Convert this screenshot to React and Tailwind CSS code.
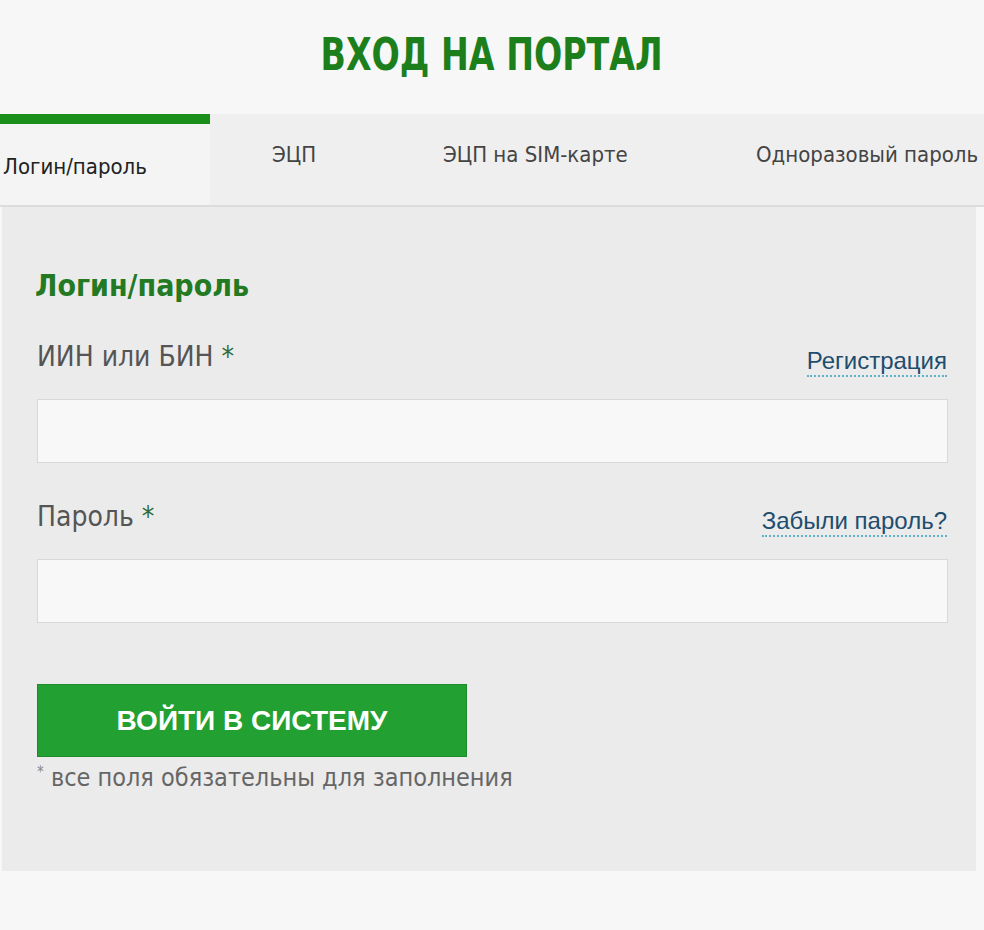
import React from 'react';

const tabs = ['Логин/пароль', 'ЭЦП', 'ЭЦП на SIM-карте', 'Одноразовый пароль'];

const Field = ({ label, link }) => (
  <div className="flex flex-col">
    <div className="flex items-center justify-between h-[44px]">
      <span className="text-[28px] text-[#555] leading-none">
        {label} <span className="text-[#2f6b35]">*</span>
      </span>
      <a
        href="#"
        className="mt-[11px] mr-[1px] text-[24px] text-[#1e4d6e] leading-none pb-[2px] border-b-2 border-dotted border-[#5fb3c9]"
        style={{ fontFamily: '"Liberation Sans", Arial, sans-serif' }}
      >
        {link}
      </a>
    </div>
    <div className="mt-[20px] h-[64px] bg-[#f8f8f8] border border-[#d8d8d8]" />
  </div>
);

export default function App() {
  return (
    <div className="w-[984px] h-[930px] bg-[#f7f7f7] overflow-hidden" style={{ fontFamily: '"DejaVu Sans Condensed", "Open Sans", sans-serif' }}>
      <div className="h-[114px] flex items-center justify-center pb-[4px]">
        <h1 className="text-[44px] leading-none font-bold text-[#1c7f1c] scale-x-[0.84]">ВХОД НА ПОРТАЛ</h1>
      </div>

      <div className="flex h-[93px] bg-[#efefef] border-b-2 border-[#dcdcdc]">
        <div className="w-[210px] bg-[#f4f4f4] border-t-[10px] border-[#1a8f1a] flex items-center pl-[3px] pt-[4px]">
          <span className="text-[22px] text-[#222]">{tabs[0]}</span>
        </div>
        <div className="w-[62px]" />
        <div className="flex items-start pt-[24px] text-[22px] text-[#444]">
          <span className="w-[171px]">{tabs[1]}</span>
          <span className="w-[313px]">{tabs[2]}</span>
          <span className="whitespace-nowrap">{tabs[3]}</span>
        </div>
      </div>

      <div className="ml-[2px] w-[974px] h-[664px] bg-[#ebebeb] pl-[35px] pr-[28px] pt-[64px]">
        <h2 className="-ml-[2px] text-[30px] font-bold text-[#237a23] leading-none">Логин/пароль</h2>
        <div className="mt-[34px] flex flex-col gap-[32px]">
          <Field label="ИИН или БИН" link="Регистрация" />
          <Field label="Пароль" link="Забыли пароль?" />
        </div>
        <button
          className="mt-[61px] w-[430px] h-[73px] bg-[#22a032] border border-[#1d8a2b] text-white text-[28px] font-bold"
          style={{ fontFamily: '"Liberation Sans", Arial, sans-serif' }}
        >
          ВОЙТИ В СИСТЕМУ
        </button>
        <p className="mt-[8px] text-[25px] text-[#666] leading-none">
          <span className="text-[#888] text-[15px] align-top">*</span> все поля обязательны для заполнения
        </p>
      </div>
    </div>
  );
}
